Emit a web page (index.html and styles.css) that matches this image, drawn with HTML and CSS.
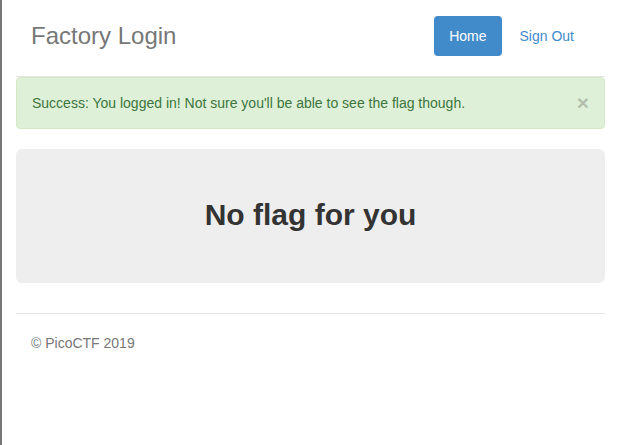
FILE: index.html
```html
<!DOCTYPE html>
<html lang="en">
<head>
<meta charset="utf-8">
<title>Factory Login</title>
<link rel="stylesheet" href="styles.css">
</head>
<body>
<div class="container">
  <div class="header">
    <h3 class="brand">Factory Login</h3>
    <ul class="nav-pills">
      <li><a class="pill active" href="#">Home</a></li>
      <li><a class="pill" href="#">Sign Out</a></li>
    </ul>
  </div>
  <div class="alert">
    <span class="alert-text">Success: You logged in! Not sure you'll be able to see the flag though.</span>
    <button class="close" type="button">×</button>
  </div>
  <div class="jumbotron">
    <h2 class="flag">No flag for you</h2>
  </div>
  <footer class="footer">
    <p class="copy">© PicoCTF 2019</p>
  </footer>
</div>
</body>
</html>
```

FILE: styles.css
```css
html, body {
  margin: 0;
  padding: 0;
  height: 100%;
}
body {
  font-family: "Liberation Sans", Arial, Helvetica, sans-serif;
  font-size: 14px;
  line-height: 20px;
  color: #333;
  background: #fff;
  border-left: 2px solid #767676;
  box-sizing: border-box;
}
.container {
  padding: 0 15px 0 14px;
}
.header {
  display: flex;
  align-items: center;
  justify-content: space-between;
  padding: 16px 16px 20px 15px;
  border-bottom: 1px solid #e5e5e5;
}
.brand {
  margin: 0;
  font-size: 24px;
  font-weight: 400;
  line-height: 40px;
  color: #777;
}
.nav-pills {
  display: flex;
  list-style: none;
  margin: 0;
  padding: 0;
  gap: 3px;
}
.pill {
  display: block;
  padding: 10px 15px;
  border-radius: 4px;
  color: #428bca;
  text-decoration: none;
  font-size: 14px;
  line-height: 20px;
}
.pill.active {
  background: #428bca;
  color: #fff;
}
.alert {
  display: flex;
  align-items: center;
  justify-content: space-between;
  padding: 15px 15px 15px 15px;
  margin-bottom: 20px;
  background: #dff0d8;
  border: 1px solid #d6e9c6;
  border-radius: 4px;
  color: #3c763d;
}
.close {
  background: none;
  border: 0;
  padding: 0;
  font-family: "Liberation Sans", Arial, sans-serif;
  font-size: 21px;
  font-weight: 700;
  line-height: 20px;
  color: #000;
  opacity: .2;
  cursor: pointer;
}
.jumbotron {
  background: #eee;
  border-radius: 6px;
  padding: 48px 15px 50px;
  margin-bottom: 30px;
  text-align: center;
}
.flag {
  margin: 0;
  font-size: 30px;
  font-weight: 700;
  line-height: 36px;
  color: #333;
}
.footer {
  border-top: 1px solid #e5e5e5;
  padding: 19px 15px 0;
  color: #777;
}
.copy {
  margin: 0;
  line-height: 20px;
}
```
